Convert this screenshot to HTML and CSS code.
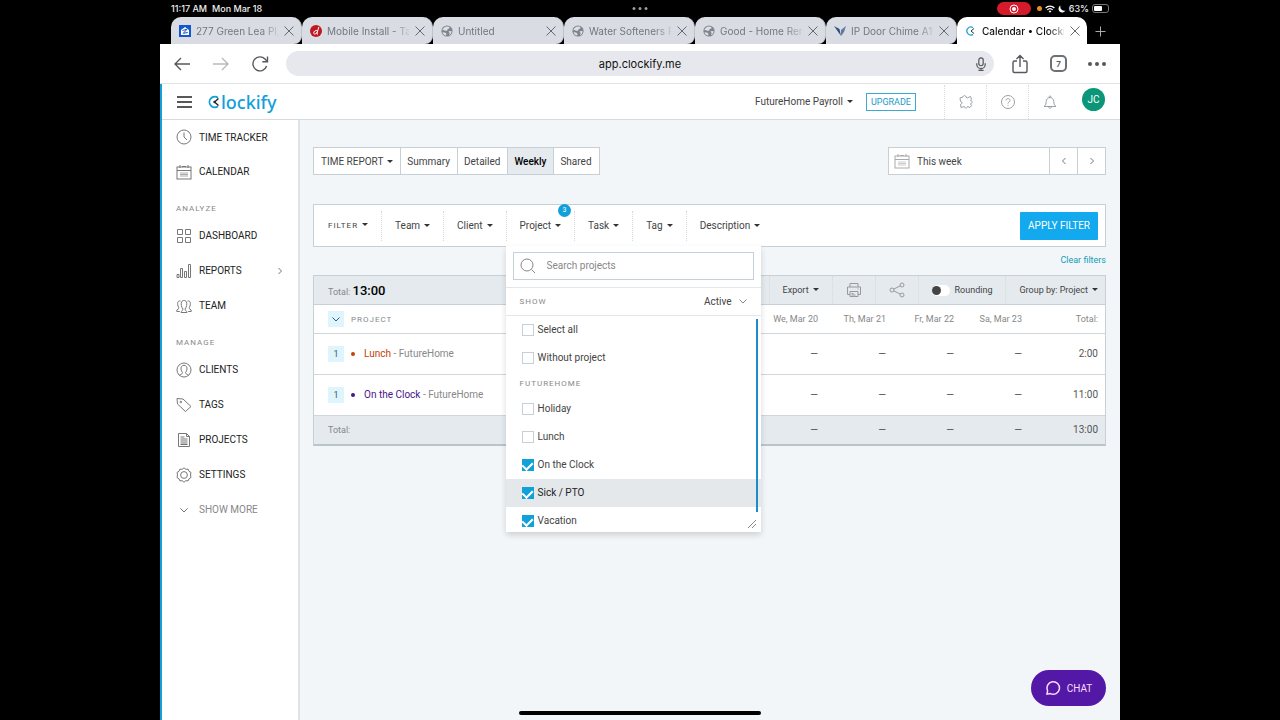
FILE: index.html
```html
<!DOCTYPE html>
<html lang="en">
<head>
    <meta charset="UTF-8">
    <meta name="viewport" content="width=device-width, initial-scale=1.0">
    <title>Calendar • Clockify</title>
    <link rel="stylesheet" href="styles.css">
</head>
<body>
<!-- shared icons -->
<svg class="sprite" aria-hidden="true">
    <symbol id="i-close" viewBox="0 0 12 12"><path d="M1.5 1.5l9 9M10.5 1.5l-9 9"/></symbol>
    <symbol id="i-globe" viewBox="0 0 12 12"><circle cx="6" cy="6" r="5.6" fill="#80848c" stroke="none"/><path fill="#dcdfe4" stroke="none" d="M6.2 1.4l2.300.7-.3 1.500-1.700.6-.4 1.600H4L2.800 5 1.300 5.300C1.600 3.200 3.800 1.300 6.200 1.400zM1.500 7.200l2.500.2 1.500 1.300-.4 1.800C3.200 10.300 1.900 9 1.500 7.200zM7.500 6.200l3-.3c.2 1.900-.8 3.500-2.400 4.300L8.600 8z"/></symbol>
    <symbol id="i-down" viewBox="0 0 8 8"><path d="M.5 2.500L4 6l3.500-3.500"/></symbol>
    <symbol id="i-right" viewBox="0 0 8 8"><path d="M2.500 1L5.500 4l-3 3"/></symbol>
    <symbol id="i-left" viewBox="0 0 8 8"><path d="M5.500 1L2.500 4l3 3"/></symbol>
    <symbol id="i-cal" viewBox="0 0 16 16"><rect x="1" y="3" width="14" height="12"/><path d="M1 6.500h14M4 1v3M12 1v3M6 2.500h4"/><path d="M4 9h8M4 10.500h8M4 12h8" opacity=".6"/></symbol>
</svg>

<div class="device">
    <div class="status">
        <span class="clock">11:17 AM</span>
        <span>Mon Mar 18</span>
        <span class="multi"><i></i><i></i><i></i></span>
        <span class="rec"><svg width="10" height="10" viewBox="0 0 10 10"><circle cx="5" cy="5" r="4" fill="none" stroke="#fff"/><circle cx="5" cy="5" r="2" fill="#fff"/></svg></span>
        <span class="mic-dot"></span>
        <svg width="10" height="8" viewBox="0 0 10 8"><path d="M.6 3a6.300 6.300 0 0 1 8.800 0M2.300 4.900a3.900 3.900 0 0 1 5.400 0" fill="none" stroke="#fff" stroke-width="1.300"/><path d="M3.600 6.200a2 2 0 0 1 2.800 0L5 7.800z" fill="#fff"/></svg>
        <svg width="8" height="8" viewBox="0 0 8 8"><path d="M2.500.6a3.700 3.700 0 1 0 5 5A4 4 0 0 1 2.500.6z" fill="#fff"/></svg>
        <span>63%</span>
        <span class="battery"><i></i></span>
    </div>

    <div class="tabs">
        <div class="tab">
            <svg class="fav" viewBox="0 0 12 12"><rect width="12" height="12" fill="#1257d0"/><path d="M2 5l4-3 4 3v5H2z" fill="#fff"/><path d="M3.500 5.500L8 4.200 4.300 8.300l4.500-.8" fill="none" stroke="#1257d0"/></svg>
            <span class="name">277 Green Lea Pl,</span>
            <button aria-label="Close tab"><svg><use href="#i-close"/></svg></button>
        </div>
        <div class="tab">
            <svg class="fav" viewBox="0 0 12 12"><circle cx="6" cy="6" r="6" fill="#bf1722"/><path d="M8.800 2L6.800 9M7.400 5.800C5.500 4.800 3.500 6.500 3.700 8.200c.3 1.600 2.500.8 3.300-1M6.800 9l1.200.1" fill="none" stroke="#fff"/></svg>
            <span class="name">Mobile Install - Ta</span>
            <button aria-label="Close tab"><svg><use href="#i-close"/></svg></button>
        </div>
        <div class="tab">
            <svg class="fav"><use href="#i-globe"/></svg>
            <span class="name">Untitled</span>
            <button aria-label="Close tab"><svg><use href="#i-close"/></svg></button>
        </div>
        <div class="tab">
            <svg class="fav"><use href="#i-globe"/></svg>
            <span class="name">Water Softeners F</span>
            <button aria-label="Close tab"><svg><use href="#i-close"/></svg></button>
        </div>
        <div class="tab">
            <svg class="fav"><use href="#i-globe"/></svg>
            <span class="name">Good - Home Rer</span>
            <button aria-label="Close tab"><svg><use href="#i-close"/></svg></button>
        </div>
        <div class="tab">
            <svg class="fav" viewBox="0 0 12 12"><path d="M0 1l5.500 3L7 11z" fill="#34507a"/><path d="M12 1L7 5v6l3-4z" fill="#5b7ba6"/></svg>
            <span class="name">IP Door Chime A10</span>
            <button aria-label="Close tab"><svg><use href="#i-close"/></svg></button>
        </div>
        <div class="tab active">
            <svg class="fav" viewBox="0 0 12 12"><path d="M8 2.600a4 4 0 1 0 0 6.800" fill="none" stroke="#1fa3d8" stroke-width="1.300"/><path d="M6 6l3-2.500M6 6l3 2.500" stroke="#333"/></svg>
            <span class="name">Calendar • Clockif</span>
            <button aria-label="Close tab"><svg><use href="#i-close"/></svg></button>
        </div>
        <button class="new-tab" aria-label="New tab"><svg width="11" height="11" viewBox="0 0 11 11"><path d="M5.500.5v10M.5 5.500h10"/></svg></button>
    </div>

    <div class="toolbar">
        <button aria-label="Back"><svg width="18" height="18" viewBox="0 0 18 18"><path d="M17 9H2M8 3L2 9l6 6"/></svg></button>
        <button class="off" aria-label="Forward"><svg width="18" height="18" viewBox="0 0 18 18"><path d="M1 9h15M10 3l6 6-6 6"/></svg></button>
        <button aria-label="Reload"><svg width="18" height="18" viewBox="0 0 18 18"><path d="M15.600 11A7 7 0 1 1 14 4l2.200 2.400M16.500 1.500v5.200h-5.200"/></svg></button>
        <label class="address">
            <input type="text" value="app.clockify.me" aria-label="Address">
            <svg width="12" height="16" viewBox="0 0 12 16"><rect x="3.500" y="1" width="5" height="9" rx="2.500"/><path d="M1.200 7v1.500a4.800 4.800 0 0 0 9.600 0V7M6 13.500v1.800M3 15.300h6"/></svg>
        </label>
        <button aria-label="Share"><svg width="18" height="20" viewBox="0 0 18 20"><path d="M6 7H3.500Q2 7 2 8.500V17q0 1.500 1.500 1.500h11Q16 18.500 16 17V8.500Q16 7 14.500 7H12M9 13V1.500M5.500 5L9 1.500 12.500 5"/></svg></button>
        <button aria-label="Open tabs"><span class="count">7</span></button>
        <button aria-label="More"><span class="dots"><i></i><i></i><i></i></span></button>
    </div>

    <div class="app">
        <header>
            <button class="menu" aria-label="Menu"><svg width="15" height="12" viewBox="0 0 15 12"><path d="M0 1h15M0 6h15M0 11h15"/></svg></button>
            <a class="logo" href="#"><svg width="13" height="14" viewBox="0 0 13 14"><path d="M10 2.800A5.300 5.300 0 1 0 10 11.200" fill="none" stroke="#12a0da" stroke-width="1.800"/><path d="M6.500 7L10.500 3.500M6.500 7l4 3.500" stroke="#222" stroke-width="1.300"/><circle cx="6.500" cy="7" r="1.200" fill="#222"/></svg>lockify</a>
            <button class="workspace caret">FutureHome Payroll</button>
            <button class="upgrade">UPGRADE</button>
            <button class="tool" aria-label="Integrations"><svg width="16" height="16" viewBox="0 0 16 16"><path d="M2 4l3-1c.3-1.800 2.500-2 3 0l1.300 1L12.500 2.500 13.500 5l-1 1.500c2.200.2 2.200 3 0 3.200l1 2L12 13.500 9.500 12.500c-.5 2-2.900 2-3.200 0L3 13.500 2.500 10.500c2-.6 2-2.600 0-3z"/></svg></button>
            <button class="tool" aria-label="Help"><svg width="16" height="16" viewBox="0 0 16 16"><circle cx="8" cy="8" r="6.500"/><path d="M6 6.500c0-2.600 4-2.600 4 0C10 8 8 8 8 9.500M8 10.800v1"/></svg></button>
            <button class="tool" aria-label="Notifications"><svg width="16" height="16" viewBox="0 0 16 16"><path d="M2 12.500c2-1.500 2-3 2.200-5C4.400 5 6 3.500 8 3.500S11.600 5 11.800 7.500c.2 2 .2 3.500 2.200 5zM6.500 12.500c0 2.300 3 2.300 3 0M7 3.500c-.3-2 2.300-2 2 0"/></svg></button>
            <button class="avatar">JC</button>
        </header>

        <div class="body">
            <nav>
                <a href="#"><svg viewBox="0 0 16 16"><circle cx="8" cy="8" r="7"/><path d="M8 3.500V8l3 3"/></svg>TIME TRACKER</a>
                <a href="#"><svg><use href="#i-cal"/></svg>CALENDAR</a>
                <h2>ANALYZE</h2>
                <a href="#"><svg viewBox="0 0 16 16"><path d="M1.500 1.500h5v5h-5zM9.500 1.500h5v5h-5zM1.500 9.500h5v5h-5zM9.500 9.500h5v5h-5z"/></svg>DASHBOARD</a>
                <a href="#"><svg viewBox="0 0 16 16"><path d="M1 11.500h2v3H1zM4.500 5.500h2v9h-2zM8.500 8.500h2v6h-2zM12.500 1.500h2v13h-2z"/></svg>REPORTS<svg class="more"><use href="#i-right"/></svg></a>
                <a href="#"><svg viewBox="0 0 16 16"><path d="M5 14.500c.2-2 2-1.500 2-3.500C5.300 9 4.800 6 5.500 4c.8-2 4.200-2 5 0 .7 2 .2 5-1.500 7 0 2 1.800 1.500 2 3.500zM4.500 3C2 2.500 1 4.500 2 8c.4 1.300 1 1.500.8 2.500L.8 12v1.500h3M11.500 3C14 2.500 15 4.500 14 8c-.4 1.300-1 1.500-.8 2.500l2 1.500v1.500h-3"/></svg>TEAM</a>
                <h2>MANAGE</h2>
                <a href="#"><svg viewBox="0 0 16 16"><circle cx="8" cy="8" r="7"/><path d="M3.500 13.200c1-1.200 3-.9 3-2.700C4.800 8.500 4.600 6 5.500 4.500c1-1.600 4-1.600 5 0 .9 1.500.7 4-1 6 0 1.800 2 1.500 3 2.700"/></svg>CLIENTS</a>
                <a href="#"><svg viewBox="0 0 16 16"><path d="M1 1.500l6 .5 8 7.500-5.500 5L1.500 7z"/><circle cx="4.800" cy="5" r=".8"/></svg>TAGS</a>
                <a href="#"><svg viewBox="0 0 16 16"><path d="M2.500 1.500h8l3 3v10h-11zM10.500 1.500v3h3M4.500 5h4M4.500 7h7M4.500 9h7M4.500 11h7M4.500 12.500h7"/></svg>PROJECTS</a>
                <a href="#"><svg viewBox="0 0 16 16"><path d="M8 .8l1.800 1.500 2.300-.2.900 2.200 2 1.200L14.500 8l.5 2.500-2 1.200-.9 2.200-2.300-.2L8 15.200l-1.800-1.500-2.300.2L3 11.700l-2-1.200L1.500 8 1 5.500l2-1.200.9-2.200 2.300.2z"/><circle cx="8" cy="8" r="3.400"/></svg>SETTINGS</a>
                <a class="show-more" href="#"><svg viewBox="0 0 16 16"><path d="M4.500 6.500L8 10l3.500-3.500"/></svg>SHOW MORE</a>
            </nav>

            <main>
                <div class="top">
                    <div class="views">
                        <button class="caret">TIME REPORT</button>
                        <button>Summary</button>
                        <button>Detailed</button>
                        <button class="on">Weekly</button>
                        <button>Shared</button>
                    </div>
                    <div class="range">
                        <button class="week"><svg><use href="#i-cal"/></svg>This week</button>
                        <button aria-label="Previous week"><svg class="arrow"><use href="#i-left"/></svg></button>
                        <button aria-label="Next week"><svg class="arrow"><use href="#i-right"/></svg></button>
                    </div>
                </div>

                <div class="filters">
                    <div class="filter"><button class="caret first">FILTER</button></div>
                    <div class="filter"><button class="caret">Team</button></div>
                    <div class="filter"><button class="caret">Client</button></div>
                    <div class="filter">
                        <button class="caret">Project</button>
                        <span class="badge">3</span>
                        <div class="dropdown">
                            <label class="search">
                                <svg width="16" height="16" viewBox="0 0 16 16"><circle cx="7" cy="7" r="6"/><path d="M11.500 11.500L15 15"/></svg>
                                <input type="text" placeholder="Search projects" aria-label="Search projects">
                            </label>
                            <div class="show"><span>SHOW</span><button>Active<svg class="arrow"><use href="#i-down"/></svg></button></div>
                            <div class="options">
                                <label><input type="checkbox">Select all</label>
                                <label><input type="checkbox">Without project</label>
                                <h3>FUTUREHOME</h3>
                                <label><input type="checkbox">Holiday</label>
                                <label><input type="checkbox">Lunch</label>
                                <label><input type="checkbox" checked>On the Clock</label>
                                <label class="hover"><input type="checkbox" checked>Sick / PTO</label>
                                <label><input type="checkbox" checked>Vacation</label>
                                <span class="scrollbar"></span>
                                <svg class="grip" width="10" height="10" viewBox="0 0 10 10"><path d="M1 9l8-8M5 9l4-4"/></svg>
                            </div>
                        </div>
                    </div>
                    <div class="filter"><button class="caret">Task</button></div>
                    <div class="filter"><button class="caret">Tag</button></div>
                    <div class="filter"><button class="caret">Description</button></div>
                    <button class="apply">APPLY FILTER</button>
                </div>
                <a class="clear" href="#">Clear filters</a>

                <section class="report">
                    <div class="summary">
                        <div class="sum">Total: <strong>13:00</strong></div>
                        <button class="caret">Export</button>
                        <button aria-label="Print"><svg viewBox="0 0 16 16"><path d="M4 5V1.500h8V5M4 12.500H1.500V5h13v7.500H12M4 9.500h8v5H4zM5.500 11.500h2M5.500 13h4M11.500 7h1"/></svg></button>
                        <button aria-label="Share report"><svg viewBox="0 0 16 16"><circle cx="3" cy="8" r="2"/><circle cx="13" cy="3" r="2"/><circle cx="13" cy="13" r="2"/><path d="M4.800 7.100l6.400-3.200M4.800 8.900l6.400 3.200"/></svg></button>
                        <label class="rounding"><input type="checkbox">Rounding</label>
                        <button class="caret group">Group by: Project</button>
                    </div>
                    <table>
                        <colgroup><col><col class="day"><col class="day"><col class="day"><col class="day"><col class="total"></colgroup>
                        <thead>
                            <tr><th><span class="num"><svg class="arrow"><use href="#i-down"/></svg></span><span class="spaced">PROJECT</span></th><th>We, Mar 20</th><th>Th, Mar 21</th><th>Fr, Mar 22</th><th>Sa, Mar 23</th><th>Total:</th></tr>
                        </thead>
                        <tbody>
                            <tr><td><span class="num">1</span><span class="project lunch">Lunch</span> - FutureHome</td><td>—</td><td>—</td><td>—</td><td>—</td><td>2:00</td></tr>
                            <tr><td><span class="num">1</span><span class="project work">On the Clock</span> - FutureHome</td><td>—</td><td>—</td><td>—</td><td>—</td><td>11:00</td></tr>
                        </tbody>
                        <tfoot>
                            <tr><td>Total:</td><td>—</td><td>—</td><td>—</td><td>—</td><td>13:00</td></tr>
                        </tfoot>
                    </table>
                </section>
            </main>
        </div>
    </div>
    <button class="chat"><svg width="16" height="16" viewBox="0 0 16 16"><path d="M2 14.200l.6-3.400a6.300 6.300 0 1 1 2.800 2.800z"/></svg>CHAT</button>
    <div class="home"></div>
</div>
</body>
</html>
```
FILE: styles.css
```css
* {
    box-sizing: border-box;
}
body {
    margin: 0;
    background: #000;
    font-family: Roboto, "Liberation Sans", sans-serif;
    font-size: 10px;
    color: #444;
}
button {
    font: inherit;
    color: inherit;
    background: none;
    border: 0;
    padding: 0;
    margin: 0;
}
a {
    color: inherit;
    text-decoration: none;
}
svg {
    fill: none;
    stroke: currentColor;
    flex: none;
}
.sprite {
    position: absolute;
    width: 0;
    height: 0;
}
.device {
    position: relative;
    width: 75%;
    min-height: 100vh;
    margin: 0 auto;
    display: flex;
    flex-direction: column;
    background: #fff;
    overflow: hidden;
}

/* browser */
.status,
.tabs,
.toolbar {
    font-family: Inter, "Liberation Sans", sans-serif;
}
.status {
    position: relative;
    height: 17px;
    padding: 0 11px;
    display: flex;
    align-items: center;
    gap: 3px;
    background: #000;
    color: #eee;
    font-size: 9px;
    font-weight: 500;
}
.status svg {
    stroke: none;
}
.clock {
    margin-right: 2px;
}
.multi {
    position: absolute;
    left: 50%;
    transform: translateX(-50%);
    display: flex;
    gap: 3px;
}
.multi i {
    width: 3px;
    height: 3px;
    border-radius: 50%;
    background: #999;
}
.rec {
    margin-left: auto;
    margin-right: 3px;
    width: 34px;
    height: 13px;
    border-radius: 7px;
    background: #d51b2b;
    display: flex;
    align-items: center;
    justify-content: center;
}
.mic-dot {
    width: 5px;
    height: 5px;
    border-radius: 50%;
    background: #f08c1e;
}
.battery {
    width: 17px;
    height: 9px;
    padding: 1px;
    border: 1px solid #777;
    border-radius: 3px;
}
.battery i {
    display: block;
    width: 60%;
    height: 5px;
    border-radius: 1px;
    background: #fff;
}
.tabs {
    height: 27px;
    padding-left: 11px;
    display: flex;
    background: #000;
    font-size: 10px;
    color: #73777e;
}
.tab {
    flex: 1;
    min-width: 0;
    display: flex;
    align-items: center;
    gap: 5px;
    padding: 0 6px 0 8px;
    background: #d9dce2;
    border-right: 1px solid #bfc3ca;
    border-radius: 10px 10px 8px 0;
}
.fav {
    width: 12px;
    height: 12px;
    stroke: none;
}
.name {
    flex: 1;
    overflow: hidden;
    white-space: nowrap;
    mask-image: linear-gradient(to right, #000 80%, rgba(0, 0, 0, 0.2));
}
.tab button {
    height: 12px;
    color: #666a70;
}
.tab button svg {
    display: block;
    width: 12px;
    height: 12px;
}
.tab.active {
    background: #fff;
    color: #111;
    font-weight: 500;
    border: 0;
    border-radius: 10px 10px 0 0;
}
.new-tab {
    width: 33px;
    padding-right: 6px;
    color: #aaa;
}
.new-tab svg {
    vertical-align: middle;
}
.toolbar {
    height: 40px;
    padding: 0 14px 0 13px;
    display: flex;
    align-items: center;
    gap: 21px;
    border-bottom: 1px solid #e2e3e6;
    color: #55585d;
}
.toolbar svg {
    display: block;
    stroke-width: 1.4;
}
.toolbar .off {
    color: #b9babd;
}
.address {
    flex: 1;
    height: 25px;
    margin-left: -4px;
    margin-right: -4px;
    padding: 0 7px 0 19px;
    display: flex;
    align-items: center;
    border-radius: 13px;
    background: #e6e8ed;
}
.address svg {
    height: 14px;
}
.address input {
    flex: 1;
    min-width: 0;
    border: 0;
    background: none;
    text-align: center;
    font: 11px Inter, "Liberation Sans", sans-serif;
    color: #111;
}
.count {
    width: 17px;
    height: 17px;
    display: flex;
    align-items: center;
    justify-content: center;
    border: 2px solid #6d7075;
    border-radius: 5px;
    font-size: 8px;
    font-weight: 600;
}
.dots {
    display: flex;
    gap: 3px;
}
.dots i {
    width: 4px;
    height: 4px;
    border-radius: 50%;
    background: #55585d;
}

/* app */
.app {
    flex: 1;
    display: flex;
    flex-direction: column;
    border-left: 2px solid #12a0da;
}
header {
    height: 36px;
    padding: 0 15px 0 15px;
    display: flex;
    align-items: center;
    border-bottom: 1px solid #d5dade;
}
.menu {
    margin-right: 16px;
    color: #222;
}
.menu svg {
    display: block;
    stroke-width: 1.3;
}
.logo {
    display: flex;
    align-items: center;
    margin-right: auto;
    font: 500 18px/24px "Noto Sans", sans-serif;
    color: #12a0da;
}
.logo svg {
    stroke: none;
}
.caret::after {
    content: "";
    display: inline-block;
    margin-left: 4px;
    vertical-align: 2px;
    border: 3px solid transparent;
    border-top-color: #333;
    border-bottom: 0;
}
.upgrade {
    height: 18px;
    margin: 0 28px 0 13px;
    padding: 0 4px;
    border: 1px solid #3ba9d0;
    font-size: 9px;
    color: #1a9ac9;
}
.tool {
    width: 42px;
    height: 34px;
    border-left: 1px dotted #dadde0;
    color: #9a9fa3;
}
.tool svg {
    vertical-align: middle;
}
.avatar {
    width: 23px;
    height: 23px;
    margin: 0 0 4px 12px;
    border-radius: 50%;
    background: #0a9678;
    color: #fff;
}
.body {
    flex: 1;
    display: flex;
}
nav {
    width: 138px;
    border-right: 2px solid #dfe3e8;
}
nav a {
    height: 35px;
    padding: 0 14px;
    display: flex;
    align-items: center;
    gap: 7px;
    color: #222;
}
nav a:first-child {
    height: 34px;
}
nav svg {
    width: 16px;
    height: 16px;
    stroke: #777;
}
nav .more {
    width: 8px;
    height: 8px;
    margin-left: auto;
}
nav h2 {
    height: 29px;
    margin: 0;
    padding: 10px 14px 0;
    font-size: 8px;
    line-height: 19px;
    font-weight: 400;
    letter-spacing: 1px;
    color: #888;
}
nav .show-more {
    color: #888;
}
main {
    flex: 1;
    min-width: 0;
    padding: 27px 14px 0 13px;
    background: #f2f6f9;
}
.top {
    display: flex;
    justify-content: space-between;
    margin-bottom: 29px;
}
.views,
.range {
    display: flex;
    height: 28px;
    border: 1px solid #c6d0d6;
    background: #fff;
}
.views button {
    padding: 0 7px 0 6px;
    border-left: 1px solid #c6d0d6;
}
.views button:first-child {
    padding: 0 7px;
    border: 0;
}
.views .on {
    background: #e4eaee;
    color: #000;
    font-weight: 500;
}
.range button {
    width: 28px;
    border-left: 1px solid #c6d0d6;
    color: #777;
}
.range .week {
    width: 160px;
    padding-left: 5px;
    display: flex;
    align-items: center;
    gap: 7px;
    border: 0;
    color: #444;
}
.week svg {
    width: 16px;
    height: 16px;
    stroke: #aaa;
}
.arrow {
    width: 8px;
    height: 8px;
}
.filters {
    display: flex;
    align-items: center;
    height: 43px;
    padding-right: 7px;
    border: 1px solid #c6d0d6;
    background: #fff;
}
.filter {
    position: relative;
    height: 30px;
    border-left: 1px dotted #d5d9dc;
}
.filter:first-child {
    border: 0;
}
.filter > button {
    height: 30px;
    padding: 0 13px;
}
.filter .first {
    padding-left: 14px;
    font-size: 8px;
    letter-spacing: 1px;
}
.badge {
    position: absolute;
    top: -7px;
    right: 3px;
    width: 13px;
    height: 13px;
    border-radius: 50%;
    background: #12a0da;
    color: #fff;
    font-size: 7px;
    line-height: 13px;
    text-align: center;
}
.apply {
    height: 28px;
    margin-left: auto;
    padding: 0 8px;
    border-radius: 1px;
    background: #12a9ee;
    color: #fff;
}
.clear {
    display: block;
    height: 28px;
    line-height: 27px;
    font-size: 9px;
    text-align: right;
    color: #129cba;
}

/* project dropdown */
.dropdown {
    position: absolute;
    z-index: 1;
    top: 35px;
    left: -1px;
    width: 255px;
    background: #fff;
    box-shadow: 0 3px 6px rgba(0, 0, 0, 0.15);
}
.search {
    height: 28px;
    margin: 6px 7px 7px;
    padding-left: 6px;
    display: flex;
    align-items: center;
    gap: 9px;
    border: 1px solid #c6d0d6;
    color: #888;
}
.search input {
    flex: 1;
    min-width: 0;
    border: 0;
    font: inherit;
}
.search input::placeholder {
    color: #888;
}
.show {
    height: 29px;
    padding: 0 14px;
    display: flex;
    align-items: center;
    justify-content: space-between;
    border-top: 1px solid #e4e7ea;
    border-bottom: 1px solid #e4e7ea;
}
.show span,
.options h3 {
    margin: 0;
    font-size: 8px;
    font-weight: 400;
    letter-spacing: 1px;
    color: #888;
}
.show button {
    display: flex;
    align-items: center;
    gap: 7px;
}
.show svg {
    stroke: #888;
}
.options {
    position: relative;
    height: 216px;
    overflow: hidden;
}
.options label {
    height: 28px;
    padding-left: 16px;
    display: flex;
    align-items: center;
    gap: 4px;
}
.options h3 {
    height: 23px;
    padding-left: 14px;
    line-height: 23px;
}
.options .hover {
    background: #e4e8eb;
    color: #222;
}
.options input {
    appearance: none;
    width: 12px;
    height: 12px;
    margin: 0;
    border: 1px solid #c6d0d6;
    background: #fff;
}
.options input:checked {
    display: flex;
    justify-content: center;
    align-items: flex-start;
    border-color: #12a0da;
    background: #12a0da;
}
.options input:checked::before {
    content: "";
    width: 5px;
    height: 8px;
    border: solid #fff;
    border-width: 0 2px 2px 0;
    transform: rotate(45deg);
}
.scrollbar {
    position: absolute;
    top: 3px;
    right: 3px;
    width: 2px;
    height: 193px;
    background: #1c8dc8;
}
.grip {
    position: absolute;
    right: 4px;
    bottom: 3px;
    stroke: #888;
}

/* report */
.report {
    border: 1px solid #c6d0d6;
    border-bottom: 2px solid #bac4cb;
    background: #fff;
}
.summary {
    display: flex;
    align-items: center;
    height: 29px;
    border-bottom: 1px solid #c6d0d6;
    background: #e4eaee;
    font-size: 9px;
}
.sum {
    flex: 1;
    padding-left: 14px;
    color: #888;
}
.sum strong {
    font-size: 13px;
    font-weight: 500;
    color: #000;
}
.summary button,
.rounding {
    height: 28px;
    padding: 0 13px;
    border-left: 1px dotted #d5dade;
}
.summary svg {
    width: 16px;
    height: 16px;
    stroke: #999;
    vertical-align: middle;
}
.summary .group {
    padding-right: 7px;
}
.rounding {
    display: flex;
    align-items: center;
    gap: 5px;
}
.rounding input {
    appearance: none;
    width: 18px;
    height: 11px;
    margin: 0;
    border-radius: 6px;
    background: #fff;
}
.rounding input::before {
    content: "";
    display: block;
    width: 9px;
    height: 9px;
    margin-top: 1px;
    border-radius: 50%;
    background: #444;
}
table {
    width: 100%;
    table-layout: fixed;
    border-collapse: collapse;
}
.day {
    width: 68px;
}
.total {
    width: 83px;
}
th,
td {
    height: 41px;
    padding: 0;
    border-bottom: 1px solid #d0d7dc;
    text-align: right;
    font-weight: 400;
    color: #555;
}
th {
    height: 28px;
    font-size: 9px;
    color: #888;
}
th:first-child,
td:first-child {
    padding-left: 14px;
    text-align: left;
    color: #888;
}
th:last-child,
td:last-child {
    padding-right: 7px;
}
tfoot td {
    height: 29px;
    border: 0;
    background: #e4eaee;
}
tfoot td:first-child {
    font-size: 9px;
}
.num {
    display: inline-block;
    width: 16px;
    height: 16px;
    margin-right: 7px;
    line-height: 16px;
    text-align: center;
    font-size: 9px;
    background: #dff5fd;
    color: #456;
}
.num .arrow {
    vertical-align: middle;
}
.spaced {
    font-size: 8px;
    letter-spacing: 1px;
}
.project::before {
    content: "";
    display: inline-block;
    width: 4px;
    height: 4px;
    margin-right: 9px;
    border-radius: 50%;
    background: currentColor;
    vertical-align: middle;
}
.lunch {
    color: #c2410c;
}
.work {
    color: #4a148c;
}
.chat {
    position: absolute;
    right: 14px;
    bottom: 14px;
    width: 75px;
    height: 36px;
    display: flex;
    align-items: center;
    justify-content: center;
    gap: 6px;
    border-radius: 18px;
    background: #5319a6;
    color: #fbdcff;
}
.chat svg {
    stroke-width: 1.5;
}
.home {
    position: absolute;
    left: 50%;
    bottom: 5px;
    width: 242px;
    height: 4px;
    border-radius: 2px;
    background: #000;
    transform: translateX(-50%);
}
```
